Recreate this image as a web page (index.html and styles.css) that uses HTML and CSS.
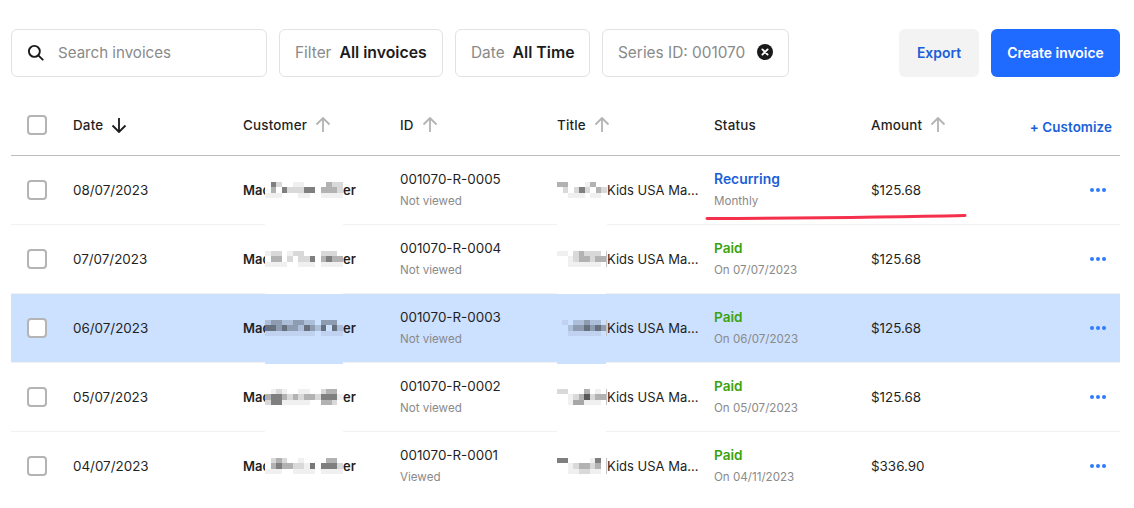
FILE: index.html
```html
<!DOCTYPE html>
<html lang="en">
<head>
<meta charset="utf-8">
<title>Invoices</title>
<link rel="stylesheet" href="styles.css">
</head>
<body>
<main class="page">
  <div class="toolbar">
    <label class="field search">
      <svg class="ico-search" viewBox="0 0 18 18" width="17" height="17"><circle cx="7.8" cy="7.8" r="5.8"/><path d="M12 12l4.6 4.6"/></svg>
      <span class="muted">Search invoices</span>
    </label>
    <div class="field filter"><span class="muted">Filter</span><strong>All invoices</strong></div>
    <div class="field date"><span class="muted">Date</span><strong>All Time</strong></div>
    <div class="field series"><span class="muted">Series ID: 001070</span>
      <svg class="ico-clear" viewBox="0 0 16 16" width="16" height="16"><circle cx="8" cy="8" r="8"/><path d="M5.4 5.4l5.2 5.2M10.600 5.4l-5.2 5.2"/></svg>
    </div>
    <button class="btn export">Export</button>
    <button class="btn create">Create invoice</button>
  </div>

  <div class="row head">
    <div class="cell check"><span class="box"></span></div>
    <div class="cell">Date <svg class="arrow dark" viewBox="0 0 16 16" width="16" height="16"><path d="M8 1v14M1.500 8.500L8 15l6.500-6.500"/></svg></div>
    <div class="cell">Customer <svg class="arrow" viewBox="0 0 16 16" width="16" height="16"><path d="M8 15V1M1.500 7.500L8 1l6.500 6.500"/></svg></div>
    <div class="cell">ID <svg class="arrow" viewBox="0 0 16 16" width="16" height="16"><path d="M8 15V1M1.500 7.500L8 1l6.500 6.500"/></svg></div>
    <div class="cell">Title <svg class="arrow" viewBox="0 0 16 16" width="16" height="16"><path d="M8 15V1M1.500 7.500L8 1l6.500 6.500"/></svg></div>
    <div class="cell">Status</div>
    <div class="cell">Amount <svg class="arrow" viewBox="0 0 16 16" width="16" height="16"><path d="M8 15V1M1.500 7.500L8 1l6.500 6.500"/></svg></div>
    <div class="cell end customize">+ Customize</div>
  </div>

  <div class="row item">
    <div class="cell check"><span class="box"></span></div>
    <div class="cell">08/07/2023</div>
    <div class="cell name">Mac<span class="mosaic"><svg class="px-name" viewBox="0 0 14 3" preserveAspectRatio="none"><path class="a" d="M0 2h3v1H0zM6 2h2v1H6zM10 2h4v1h-4zM5 0h2v1H5z"/><path class="b" d="M2 0h1v1H2zM12 0h2v1h-2zM4 1h3v1H4zM13 1h1v1h-1z"/><path class="c" d="M1 1h1v1H1zM11 0h1v1h-1zM10 1h3v1h-3z"/><path class="d" d="M1 0h1v1H1zM3 1h1v1H3zM7 1h2v1H7z"/></svg></span>er</div>
    <div class="cell stack"><span>001070-R-0005</span><small>Not viewed</small></div>
    <div class="cell title"><span class="mosaic"><svg class="px-title" viewBox="0 0 9 3" preserveAspectRatio="none"><path class="a" d="M2 2h3v1H2zM6 2h2v1H6zM5 0h1v1H5z"/><path class="b" d="M1 1h1v1H1zM3 1h1v1H3zM5 1h1v1H5zM8 1h1v1H8z"/><path class="c" d="M0 0h2v1H0zM6 0h1v1H6zM7 1h1v1H7z"/><path class="d" d="M4 1h1v1H4z"/></svg></span><span class="clip">Kids USA Ma...</span></div>
    <div class="cell stack"><b class="recurring">Recurring</b><small>Monthly</small></div>
    <div class="cell">$125.68</div>
    <div class="cell end"><svg class="dots" viewBox="0 0 16 4" width="16" height="4"><circle cx="2" cy="2" r="2"/><circle cx="8" cy="2" r="2"/><circle cx="14" cy="2" r="2"/></svg></div>
  </div>

  <div class="row item">
    <div class="cell check"><span class="box"></span></div>
    <div class="cell">07/07/2023</div>
    <div class="cell name">Mac<span class="mosaic"><svg class="px-name" viewBox="0 0 14 3" preserveAspectRatio="none"><path class="a" d="M0 0h1v1H0zM0 2h4v1H0zM6 2h3v1H6zM10 2h4v1h-4zM4 0h1v1H4z"/><path class="b" d="M1 0h2v1H1zM5 0h2v1H5zM10 0h3v1h-3zM4 1h1v1H4zM6 1h2v1H6z"/><path class="c" d="M1 1h2v1H1zM10 1h1v1h-1zM12 1h2v1h-2z"/><path class="d" d="M8 1h1v1H8zM11 1h1v1h-1z"/></svg></span>er</div>
    <div class="cell stack"><span>001070-R-0004</span><small>Not viewed</small></div>
    <div class="cell title"><span class="mosaic edge"><svg class="px-title" viewBox="0 0 9 3" preserveAspectRatio="none"><path class="a" d="M0 0h2v1H0zM2 1h1v1H2zM2 2h6v1H2z"/><path class="b" d="M3 0h1v1H3zM5 0h3v1H5zM3 1h1v1H3zM6 1h1v1H6z"/><path class="c" d="M4 0h1v1H4zM4 1h2v1H4zM7 1h2v1H7z"/></svg></span><span class="clip">Kids USA Ma...</span></div>
    <div class="cell stack"><b class="paid">Paid</b><small>On 07/07/2023</small></div>
    <div class="cell">$125.68</div>
    <div class="cell end"><svg class="dots" viewBox="0 0 16 4" width="16" height="4"><circle cx="2" cy="2" r="2"/><circle cx="8" cy="2" r="2"/><circle cx="14" cy="2" r="2"/></svg></div>
  </div>

  <div class="row item selected">
    <div class="cell check"><span class="box"></span></div>
    <div class="cell">06/07/2023</div>
    <div class="cell name">Mac<span class="mosaic"><svg class="px-name" viewBox="0 0 14 3" preserveAspectRatio="none"><path class="a" d="M0 2h9v1H0zM10 2h4v1h-4z"/><path class="b" d="M0 0h1v1H0zM3 0h2v1H3zM7 0h2v1H7zM6 1h1v1H6zM9 1h1v1H9zM13 1h1v1h-1z"/><path class="c" d="M1 0h2v1H1zM5 0h2v1H5zM10 0h3v1h-3zM2 1h1v1H2zM4 1h2v1H4zM8 1h1v1H8z"/><path class="d" d="M0 1h2v1H0zM3 1h1v1H3zM7 1h1v1H7zM10 1h1v1h-1zM12 1h1v1h-1z"/></svg></span>er</div>
    <div class="cell stack"><span>001070-R-0003</span><small>Not viewed</small></div>
    <div class="cell title"><span class="mosaic edge"><svg class="px-title" viewBox="0 0 9 3" preserveAspectRatio="none"><path class="a" d="M1 0h1v1H1zM2 2h6v1H2z"/><path class="b" d="M2 1h1v1H2zM3 0h2v1H3zM6 0h2v1H6z"/><path class="c" d="M3 1h2v1H3zM5 0h1v1H5zM6 1h1v1H6zM8 1h1v1H8z"/><path class="d" d="M5 1h1v1H5zM7 1h1v1H7z"/></svg></span><span class="clip">Kids USA Ma...</span></div>
    <div class="cell stack"><b class="paid">Paid</b><small>On 06/07/2023</small></div>
    <div class="cell">$125.68</div>
    <div class="cell end"><svg class="dots" viewBox="0 0 16 4" width="16" height="4"><circle cx="2" cy="2" r="2"/><circle cx="8" cy="2" r="2"/><circle cx="14" cy="2" r="2"/></svg></div>
  </div>

  <div class="row item">
    <div class="cell check"><span class="box"></span></div>
    <div class="cell">05/07/2023</div>
    <div class="cell name">Mac<span class="mosaic"><svg class="px-name" viewBox="0 0 14 3" preserveAspectRatio="none"><path class="a" d="M1 0h1v1H1zM3 0h1v1H3zM6 0h2v1H6zM3 2h5v1H3zM13 1h1v1h-1z"/><path class="b" d="M2 0h1v1H2zM10 0h1v1h-1zM4 1h1v1H4zM6 1h1v1H6zM9 1h1v1H9zM0 2h1v1H0zM12 2h1v1h-1z"/><path class="c" d="M11 0h2v1h-2zM0 1h1v1H0zM3 1h1v1H3zM5 1h1v1H5zM7 1h2v1H7zM10 2h2v1h-2z"/><path class="d" d="M1 1h2v1H1zM1 2h2v1H1zM10 1h3v1h-3z"/></svg></span>er</div>
    <div class="cell stack"><span>001070-R-0002</span><small>Not viewed</small></div>
    <div class="cell title"><span class="mosaic edge"><svg class="px-title" viewBox="0 0 9 3" preserveAspectRatio="none"><path class="a" d="M2 1h1v1H2zM7 0h1v1H7zM2 2h6v1H2z"/><path class="b" d="M0 0h2v1H0zM3 1h1v1H3zM6 1h1v1H6z"/><path class="c" d="M4 1h2v1H4zM5 0h1v1H5zM3 2h2v1H3zM7 1h2v1H7z"/><path class="d" d="M5 1h1v1H5z"/></svg></span><span class="clip">Kids USA Ma...</span></div>
    <div class="cell stack"><b class="paid">Paid</b><small>On 05/07/2023</small></div>
    <div class="cell">$125.68</div>
    <div class="cell end"><svg class="dots" viewBox="0 0 16 4" width="16" height="4"><circle cx="2" cy="2" r="2"/><circle cx="8" cy="2" r="2"/><circle cx="14" cy="2" r="2"/></svg></div>
  </div>

  <div class="row item last">
    <div class="cell check"><span class="box"></span></div>
    <div class="cell">04/07/2023</div>
    <div class="cell name">Mac<span class="mosaic"><svg class="px-name" viewBox="0 0 14 3" preserveAspectRatio="none"><path class="a" d="M2 2h1v1H2zM0 2h2v1H0zM5 2h4v1H5zM6 0h1v1H6zM7 1h2v1H7zM10 2h4v1h-4z"/><path class="b" d="M1 0h1v1H1zM3 0h1v1H3zM5 1h2v1H5zM13 1h1v1h-1z"/><path class="c" d="M2 0h1v1H2zM11 0h2v1h-2zM1 1h1v1H1zM3 1h2v1H3z"/><path class="d" d="M2 1h1v1H2zM8 1h1v1H8zM10 1h3v1h-3z"/></svg></span>er</div>
    <div class="cell stack"><span>001070-R-0001</span><small>Viewed</small></div>
    <div class="cell title"><span class="mosaic edge"><svg class="px-title" viewBox="0 0 9 3" preserveAspectRatio="none"><path class="a" d="M2 1h1v1H2zM6 0h1v1H6zM2 2h2v1H2zM6 2h2v1H6z"/><path class="b" d="M3 1h1v1H3zM4 2h2v1H4zM6 1h1v1H6z"/><path class="c" d="M4 1h2v1H4zM7 1h1v1H7z"/><path class="d" d="M0 0h2v1H0zM7 0h1v1H7z"/></svg></span><span class="clip">Kids USA Ma...</span></div>
    <div class="cell stack"><b class="paid">Paid</b><small>On 04/11/2023</small></div>
    <div class="cell">$336.90</div>
    <div class="cell end"><svg class="dots" viewBox="0 0 16 4" width="16" height="4"><circle cx="2" cy="2" r="2"/><circle cx="8" cy="2" r="2"/><circle cx="14" cy="2" r="2"/></svg></div>
  </div>

  <svg class="scribble" viewBox="0 0 264 8" width="264" height="8"><path d="M2 5.500C70 5.200 180 4.500 260 2.500"/></svg>
</main>
</body>
</html>
```

FILE: styles.css
```css
* { box-sizing: border-box; }

html, body { margin: 0; background: #fff; }

body {
  font-family: Inter, "Liberation Sans", sans-serif;
  font-size: 13.4px;
  color: #1f1f1f;
}

.page {
  position: relative;
  height: 508px;
  overflow: hidden;
  padding: 29px 14px 0 11px;
}

.toolbar {
  display: flex;
  align-items: stretch;
  gap: 12px;
  height: 48px;
  margin-bottom: 18px;
}

.field {
  display: flex;
  flex: none;
  align-items: center;
  border: 1px solid #e2e2e2;
  border-radius: 6px;
  padding-bottom: 2px;
  font-size: 15.4px;
  white-space: nowrap;
}

.field strong { font-size: 15.8px; font-weight: 600; color: #1c1c1c; }

.muted { color: #8a8a8a; }

.search { width: 256px; padding-left: 15px; gap: 14px; font-size: 15.1px; }
.filter { width: 164px; padding-left: 15px; gap: 8px; }
.date   { width: 135px; padding-left: 15px; gap: 8px; }
.series { width: 187px; padding-left: 15px; gap: 12px; }

.ico-search { fill: none; stroke: #1a1a1a; stroke-width: 2; stroke-linecap: round; }
.ico-clear circle { fill: #1a1a1a; }
.ico-clear path { fill: none; stroke: #fff; stroke-width: 1.9; stroke-linecap: round; }

.btn {
  flex: none;
  border: 0;
  border-radius: 6px;
  padding: 0;
  font: 600 13.9px Inter, "Liberation Sans", sans-serif;
}

.export { width: 80px; margin-left: auto; background: #f3f3f3; color: #1a5fd8; }
.create { width: 129px; background: #1f6bff; color: #fff; }

.row {
  display: grid;
  grid-template-columns: 62px 170px 157px 157px 157px 157px 120px 1fr;
  align-items: center;
}

.head {
  height: 61px;
  border-bottom: 1px solid #bdbdbd;
  font-weight: 500;
  letter-spacing: 0.2px;
}

.head .cell { display: flex; align-items: center; gap: 8px; }
.head .customize { letter-spacing: 0.08px; }

.item { height: 69px; border-bottom: 1px solid #f1f1f1; }
.item.last { border-bottom-color: transparent; }
.selected { background: #cce0ff; }

.cell { min-width: 0; white-space: nowrap; }

.check { padding-left: 16px; display: flex; align-items: center; }

.box {
  width: 20px;
  height: 20px;
  border: 2px solid #b4b4b4;
  border-radius: 4px;
  background: #fff;
}

.arrow { fill: none; stroke: #b3b3b3; stroke-width: 1.8; }
.arrow.dark { stroke: #1a1a1a; }

.end { display: flex; justify-content: flex-end; padding-right: 14px; }

.head .end { justify-content: flex-end; padding-right: 8px; }

.customize { color: #1a5fd8; font-weight: 600; position: relative; top: 2px; }

.dots { fill: #2f7bff; }

.name { display: flex; align-items: center; font-weight: 600; font-size: 13px; }

.stack { display: flex; flex-direction: column; gap: 6px; }
.stack > span, .stack > b { line-height: 16px; }
.stack small { font-size: 11.6px; line-height: 16px; color: #8a8a8a; }

.recurring { color: #1a5fd8; font-weight: 600; font-size: 13.9px; }
.paid { color: #3aa30f; font-weight: 600; font-size: 13.6px; }

.title { display: flex; align-items: center; }
.clip { font-size: 13px; }

.mosaic { position: relative; display: block; flex: none; height: 16px; }
.name .mosaic { width: 78px; margin-left: -5px; background: #fff; }
.selected .name .mosaic { background: #cce0ff; }
.title .mosaic { width: 50px; }
.title .mosaic.edge { border-right: 1px solid #c4c4c4; }

.mosaic::after {
  content: "";
  position: absolute;
  left: 0;
  right: 0;
  top: 42px;
  height: 1px;
  background: #fff;
}

.selected .mosaic::after { height: 2px; background: #cce0ff; }
.last .mosaic::after { display: none; }

.mosaic svg { display: block; width: 100%; height: 16px; shape-rendering: crispEdges; }

.a { fill: rgba(0, 0, 0, .06); }
.b { fill: rgba(0, 0, 0, .15); }
.c { fill: rgba(0, 0, 0, .3); }
.d { fill: rgba(0, 0, 0, .5); }

.scribble {
  position: absolute;
  left: 705px;
  top: 213px;
  fill: none;
  stroke: #f5304c;
  stroke-width: 3;
  stroke-linecap: round;
}
```
